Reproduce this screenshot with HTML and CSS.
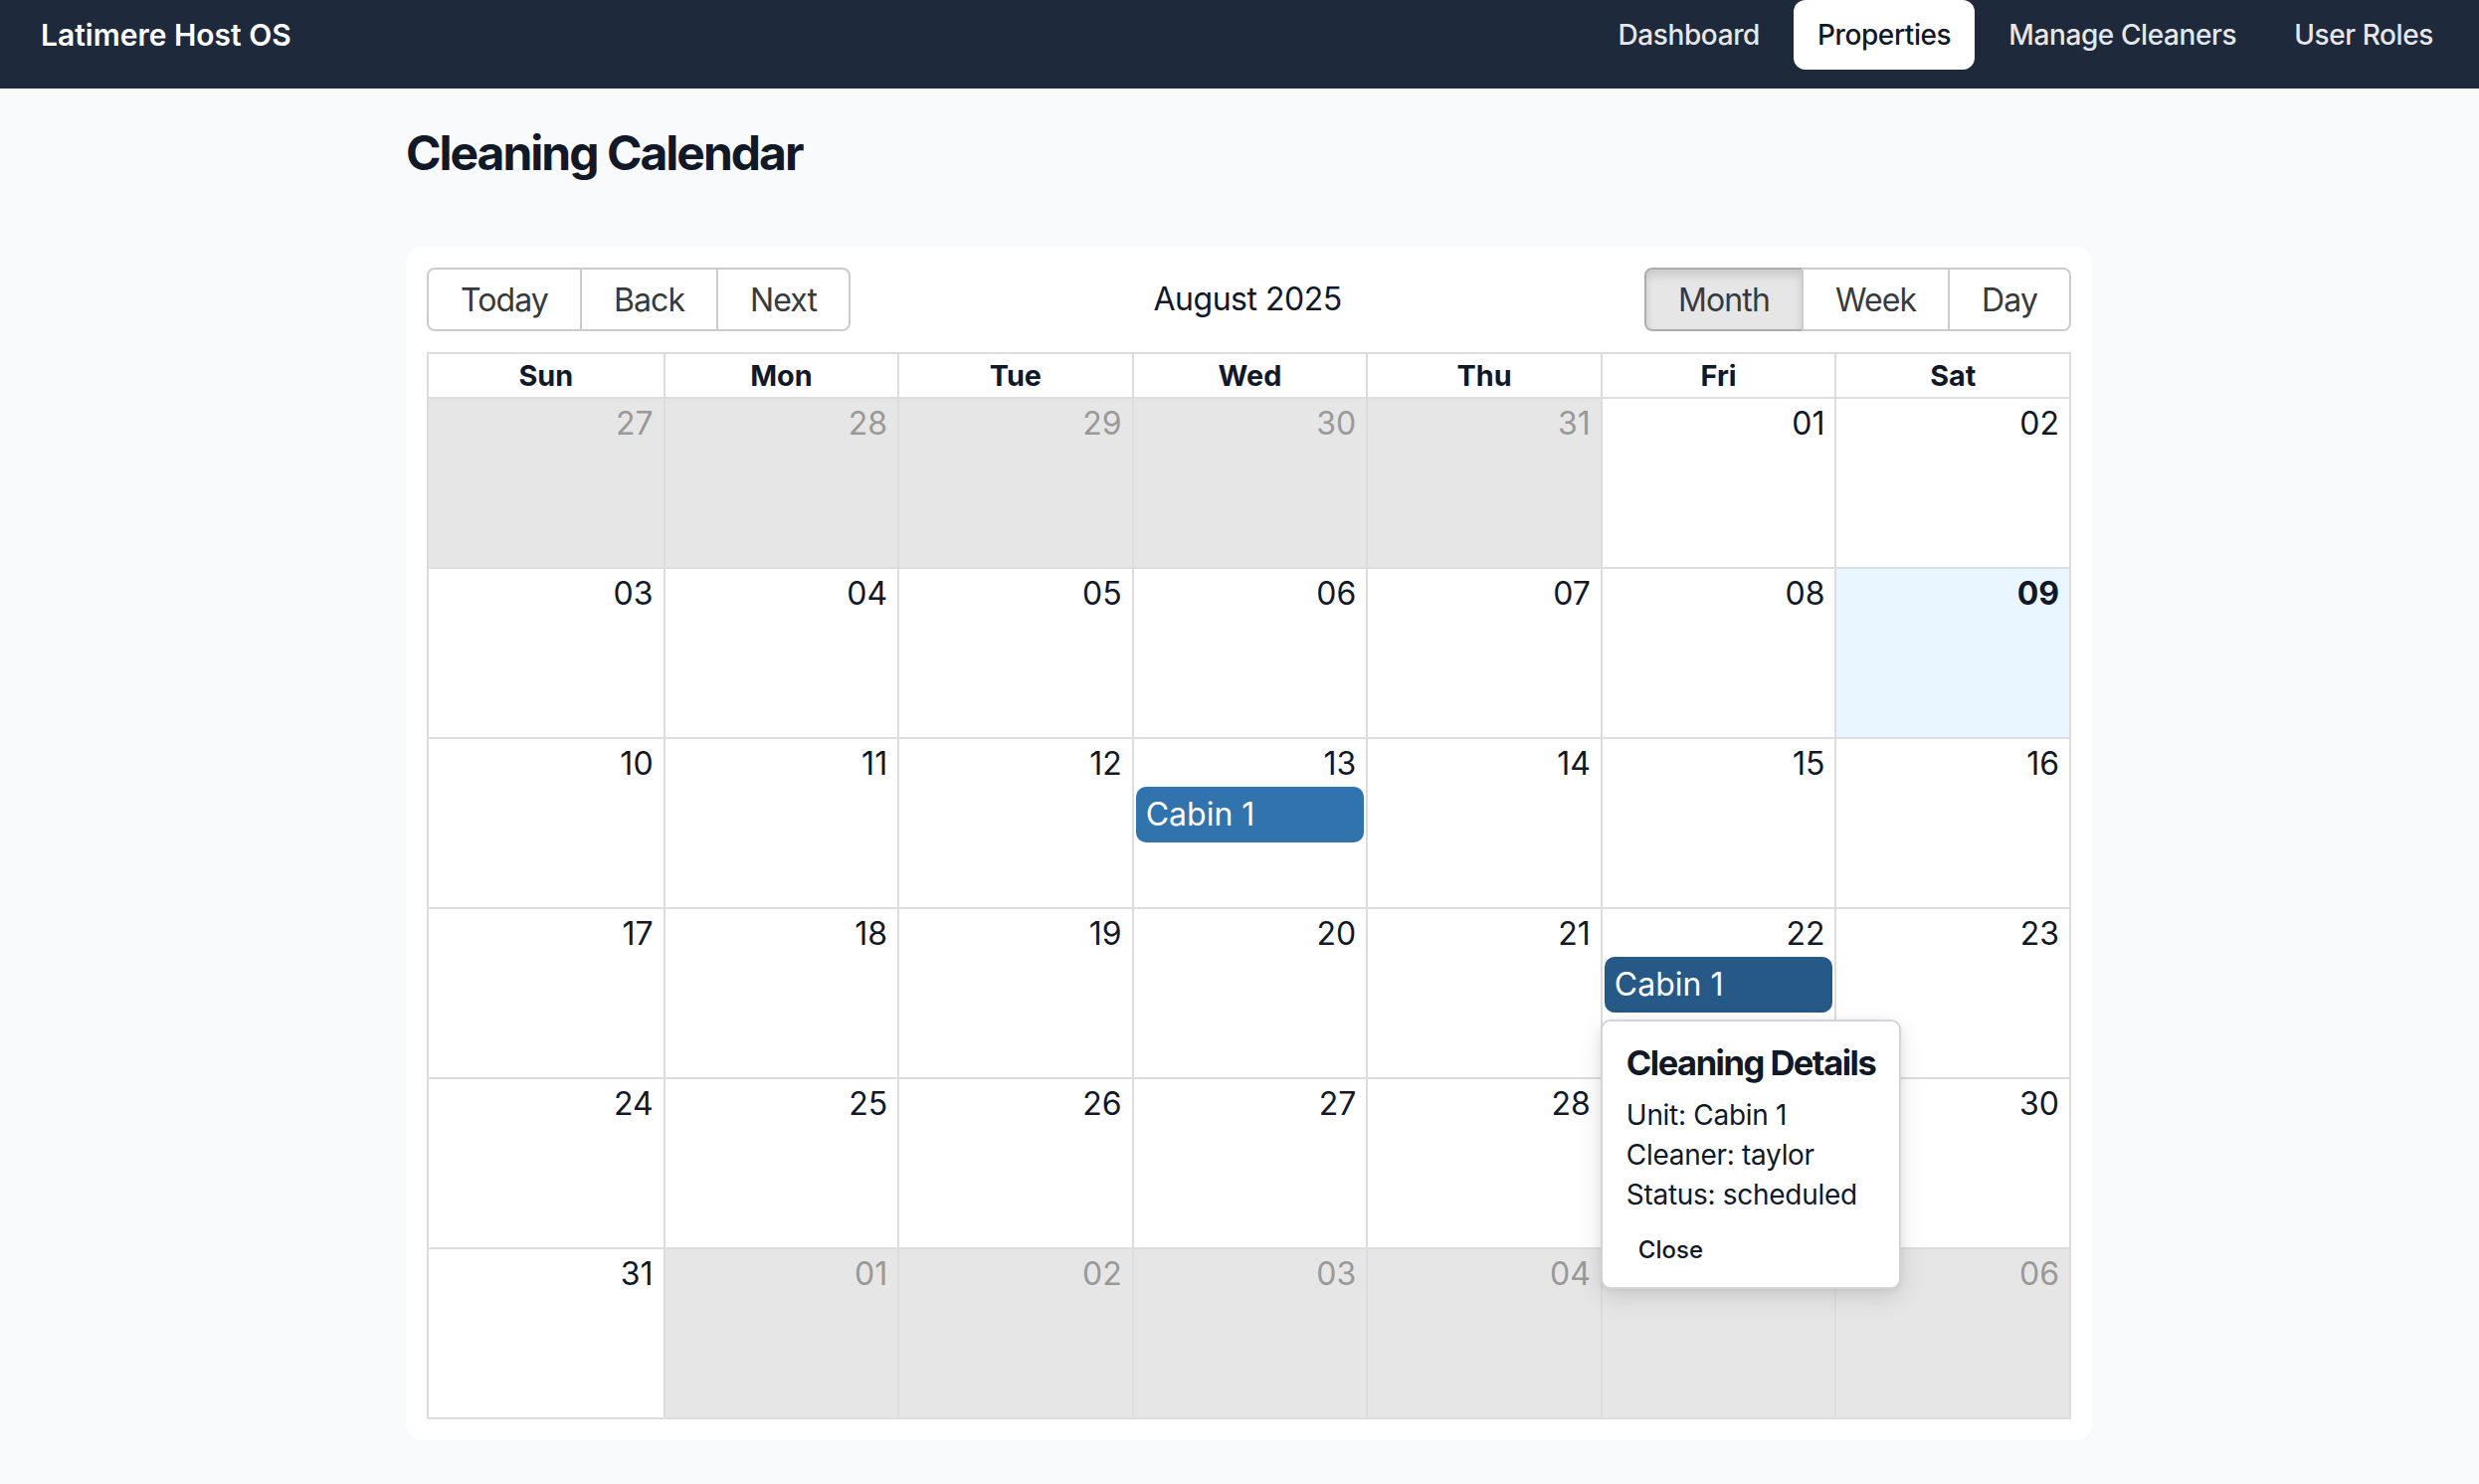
FILE: index.html
```html
<!DOCTYPE html>
<html lang="en">
<head>
    <meta charset="UTF-8">
    <meta name="viewport" content="width=device-width, initial-scale=1.0">
    <title>Cleaning Calendar - Latimere Host OS</title>
    <link rel="stylesheet" href="styles.css">
</head>
<body>

    <!-- Top navigation -->
    <nav class="navbar">
        <div class="brand">Latimere Host OS</div>
        <div class="nav-links">
            <a class="nav-link" href="#">Dashboard</a>
            <a class="nav-link active" href="#">Properties</a>
            <a class="nav-link" href="#">Manage Cleaners</a>
            <a class="nav-link" href="#">User Roles</a>
        </div>
    </nav>

    <main class="page">
        <h1 class="page-title">Cleaning Calendar</h1>

        <div class="calendar-card">
            <div class="toolbar">
                <span class="btn-group">
                    <button>Today</button>
                    <button>Back</button>
                    <button>Next</button>
                </span>
                <span class="toolbar-label">August 2025</span>
                <span class="btn-group">
                    <button class="active">Month</button>
                    <button>Week</button>
                    <button>Day</button>
                </span>
            </div>

            <div class="month-view">
                <div class="month-header">
                    <div class="header-cell">Sun</div>
                    <div class="header-cell">Mon</div>
                    <div class="header-cell">Tue</div>
                    <div class="header-cell">Wed</div>
                    <div class="header-cell">Thu</div>
                    <div class="header-cell">Fri</div>
                    <div class="header-cell">Sat</div>
                </div>

                <div class="month-row">
                    <div class="day off-range"><div class="date">27</div></div>
                    <div class="day off-range"><div class="date">28</div></div>
                    <div class="day off-range"><div class="date">29</div></div>
                    <div class="day off-range"><div class="date">30</div></div>
                    <div class="day off-range"><div class="date">31</div></div>
                    <div class="day"><div class="date">01</div></div>
                    <div class="day"><div class="date">02</div></div>
                </div>

                <div class="month-row">
                    <div class="day"><div class="date">03</div></div>
                    <div class="day"><div class="date">04</div></div>
                    <div class="day"><div class="date">05</div></div>
                    <div class="day"><div class="date">06</div></div>
                    <div class="day"><div class="date">07</div></div>
                    <div class="day"><div class="date">08</div></div>
                    <div class="day today"><div class="date">09</div></div>
                </div>

                <div class="month-row">
                    <div class="day"><div class="date">10</div></div>
                    <div class="day"><div class="date">11</div></div>
                    <div class="day"><div class="date">12</div></div>
                    <div class="day">
                        <div class="date">13</div>
                        <div class="event">Cabin 1</div>
                    </div>
                    <div class="day"><div class="date">14</div></div>
                    <div class="day"><div class="date">15</div></div>
                    <div class="day"><div class="date">16</div></div>
                </div>

                <div class="month-row">
                    <div class="day"><div class="date">17</div></div>
                    <div class="day"><div class="date">18</div></div>
                    <div class="day"><div class="date">19</div></div>
                    <div class="day"><div class="date">20</div></div>
                    <div class="day"><div class="date">21</div></div>
                    <div class="day has-popup">
                        <div class="date">22</div>
                        <div class="event selected">Cabin 1</div>

                        <!-- Details popup for the selected cleaning -->
                        <div class="popup">
                            <h3>Cleaning Details</h3>
                            <p>Unit: Cabin 1</p>
                            <p>Cleaner: taylor</p>
                            <p>Status: scheduled</p>
                            <button class="popup-close">Close</button>
                        </div>
                    </div>
                    <div class="day"><div class="date">23</div></div>
                </div>

                <div class="month-row">
                    <div class="day"><div class="date">24</div></div>
                    <div class="day"><div class="date">25</div></div>
                    <div class="day"><div class="date">26</div></div>
                    <div class="day"><div class="date">27</div></div>
                    <div class="day"><div class="date">28</div></div>
                    <div class="day"><div class="date">29</div></div>
                    <div class="day"><div class="date">30</div></div>
                </div>

                <div class="month-row">
                    <div class="day"><div class="date">31</div></div>
                    <div class="day off-range"><div class="date">01</div></div>
                    <div class="day off-range"><div class="date">02</div></div>
                    <div class="day off-range"><div class="date">03</div></div>
                    <div class="day off-range"><div class="date">04</div></div>
                    <div class="day off-range"><div class="date">05</div></div>
                    <div class="day off-range"><div class="date">06</div></div>
                </div>
            </div>
        </div>
    </main>

</body>
</html>
```

FILE: styles.css
```css
/* Base */
* {
    box-sizing: border-box;
}
body {
    margin: 0;
    background: #f9fafb;
    font-family: 'Inter', 'Noto Sans', sans-serif;
    color: #111827;
    line-height: 1.5;
}

/* Navbar */
.navbar {
    height: 89px;
    background: #1e293b;
    display: flex;
    justify-content: space-between;
    align-items: flex-start;
    padding: 0 22px 0 41px;
}
.brand {
    line-height: 70px;
    font-size: 30px;
    font-weight: 600;
    color: #fff;
}
.nav-links {
    display: flex;
    gap: 10px;
}
.nav-link {
    display: block;
    height: 70px;
    line-height: 70px;
    padding: 0 24px;
    border-radius: 12px;
    font-size: 28px;
    font-weight: 500;
    letter-spacing: -0.4px;
    color: #e5e7eb;
    text-decoration: none;
}
.nav-link.active {
    background: #fff;
    color: #111827;
}

/* Page */
.page {
    width: 1695px;
    margin-left: 408px;
    padding-top: 33px;
}
.page-title {
    margin: 0 0 62px;
    font-size: 48px;
    line-height: 64px;
    font-weight: 700;
    letter-spacing: -2px;
}

/* Calendar card */
.calendar-card {
    background: #fff;
    border-radius: 16px;
    padding: 21px;
}

/* Toolbar */
.toolbar {
    display: flex;
    align-items: center;
    margin-bottom: 21px;
}
.toolbar-label {
    flex: 1;
    text-align: center;
    font-size: 32px;
    letter-spacing: -0.5px;
}
.btn-group {
    display: inline-flex;
}
.btn-group button {
    height: 64px;
    padding: 0 32px;
    margin: 0;
    background: #fff;
    border: 2px solid #ccc;
    border-radius: 0;
    font-family: inherit;
    font-size: 32px;
    letter-spacing: -0.9px;
    color: #373a3c;
    cursor: pointer;
}
.btn-group button + button {
    margin-left: -2px;
}
.btn-group button:first-child {
    border-radius: 8px 0 0 8px;
}
.btn-group button:last-child {
    border-radius: 0 8px 8px 0;
}
.btn-group button.active {
    background: #e6e6e6;
    border-color: #adadad;
    box-shadow: inset 0 6px 10px rgba(0, 0, 0, 0.125);
}

/* Month grid */
.month-view {
    height: 1073px;
    border: 2px solid #ddd;
    display: flex;
    flex-direction: column;
}
.month-header {
    display: grid;
    grid-template-columns: repeat(7, 1fr);
    border-bottom: 2px solid #ddd;
}
.header-cell {
    height: 43px;
    line-height: 43px;
    text-align: center;
    font-size: 28.8px;
    font-weight: 700;
}
.header-cell + .header-cell {
    border-left: 2px solid #ddd;
}
.month-row {
    flex: 1;
    display: grid;
    grid-template-columns: repeat(7, 1fr);
}
.month-row + .month-row {
    border-top: 2px solid #ddd;
}
.day {
    min-width: 0;
}
.day + .day {
    border-left: 2px solid #ddd;
}
.day.off-range {
    background: #e6e6e6;
}
.day.off-range .date {
    color: #999;
}
.day.today {
    background: #eaf6ff;
}
.day.today .date {
    font-weight: 700;
}
.date {
    text-align: right;
    padding: 2px 10px 0 0;
    font-size: 32px;
    line-height: 46px;
}

/* Events */
.event {
    margin: 0 2px;
    padding: 4px 10px;
    border-radius: 10px;
    background: #3174ad;
    color: #fff;
    font-size: 32px;
    line-height: 48px;
    white-space: nowrap;
    overflow: hidden;
}
.event.selected {
    background: #265985;
}

/* Popup */
.has-popup {
    position: relative;
}
.popup {
    position: absolute;
    top: 111px;
    left: -2px;
    z-index: 10;
    white-space: nowrap;
    background: #fff;
    border: 2px solid #d4d4d8;
    border-radius: 10px;
    padding: 17px 24px 13px;
    box-shadow: 0 8px 24px rgba(0, 0, 0, 0.12), 0 2px 6px rgba(0, 0, 0, 0.06);
}
.popup h3 {
    margin: 0 0 7px;
    font-size: 34.5px;
    line-height: 50px;
    font-weight: 700;
    letter-spacing: -1.5px;
}
.popup p {
    margin: 0;
    font-size: 28px;
    line-height: 40px;
    letter-spacing: -0.3px;
}
.popup-close {
    margin-top: 12px;
    padding: 8px 12px;
    background: none;
    border: none;
    font-family: inherit;
    font-size: 24px;
    line-height: 32px;
    font-weight: 500;
    color: #111827;
    cursor: pointer;
}
```
